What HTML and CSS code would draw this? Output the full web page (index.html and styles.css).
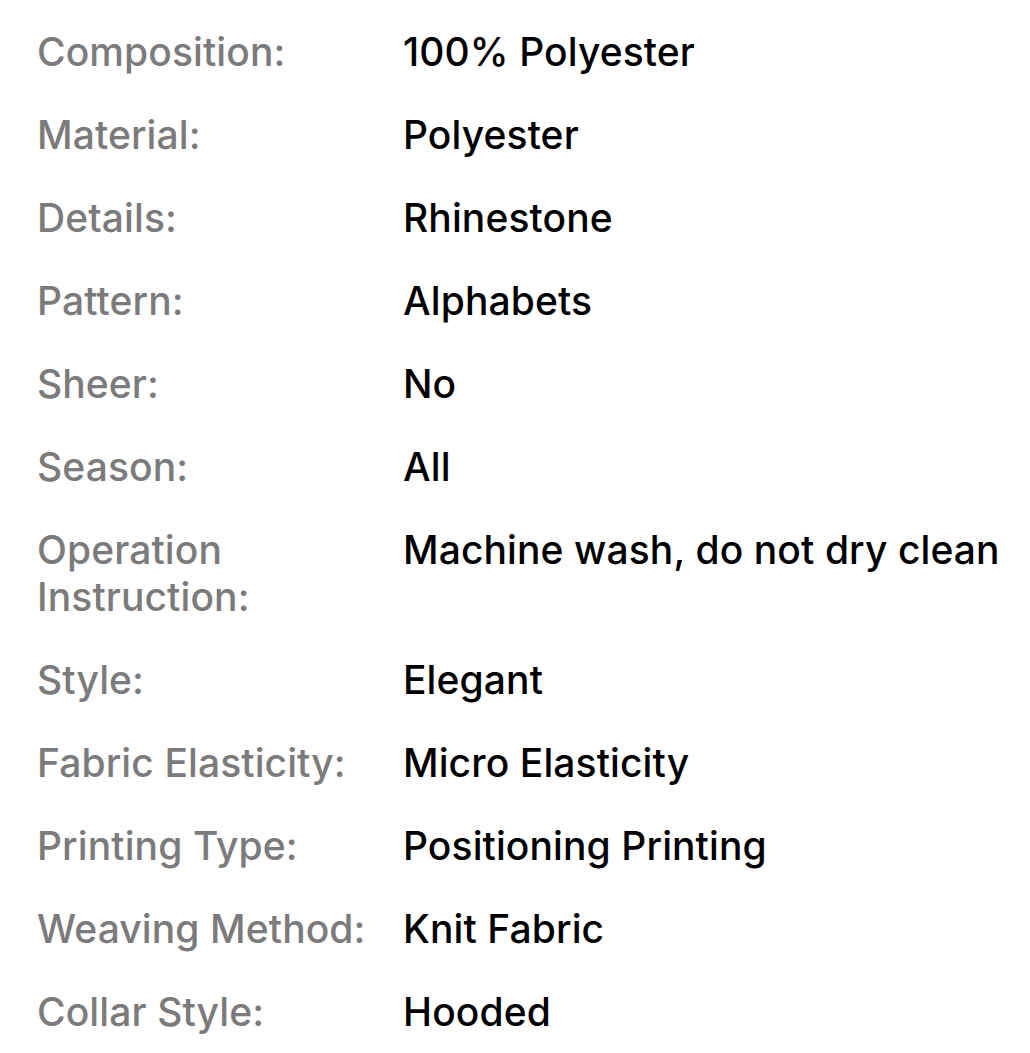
FILE: index.html
```html
<!DOCTYPE html>
<html lang="en">
<head>
<meta charset="utf-8">
<link rel="stylesheet" href="styles.css">
</head>
<body>
<dl class="specs">
  <div class="row"><dt>Composition:</dt><dd>100% Polyester</dd></div>
  <div class="row"><dt>Material:</dt><dd>Polyester</dd></div>
  <div class="row"><dt>Details:</dt><dd>Rhinestone</dd></div>
  <div class="row"><dt>Pattern:</dt><dd>Alphabets</dd></div>
  <div class="row"><dt>Sheer:</dt><dd>No</dd></div>
  <div class="row"><dt>Season:</dt><dd>All</dd></div>
  <div class="row"><dt>Operation Instruction:</dt><dd>Machine wash, do not dry clean</dd></div>
  <div class="row"><dt>Style:</dt><dd>Elegant</dd></div>
  <div class="row"><dt>Fabric Elasticity:</dt><dd>Micro Elasticity</dd></div>
  <div class="row"><dt>Printing Type:</dt><dd>Positioning Printing</dd></div>
  <div class="row"><dt>Weaving Method:</dt><dd>Knit Fabric</dd></div>
  <div class="row"><dt>Collar Style:</dt><dd>Hooded</dd></div>
</dl>
</body>
</html>
```

FILE: styles.css
```css
html, body {
  margin: 0;
  padding: 0;
  background: #ffffff;
}
body {
  font-family: Inter, "Noto Sans", sans-serif;
  font-size: 39px;
  line-height: 47px;
  font-weight: 500;
  letter-spacing: 0.1px;
  -webkit-font-smoothing: antialiased;
}
.specs {
  margin: 0;
  padding: 28px 0 0 37px;
  display: flex;
  flex-direction: column;
  gap: 36px;
}
.row {
  display: grid;
  grid-template-columns: 366px 1fr;
}
.row dt {
  color: #7b7b7b;
  margin: 0;
}
.row dd {
  color: #000000;
  margin: 0;
}
```
